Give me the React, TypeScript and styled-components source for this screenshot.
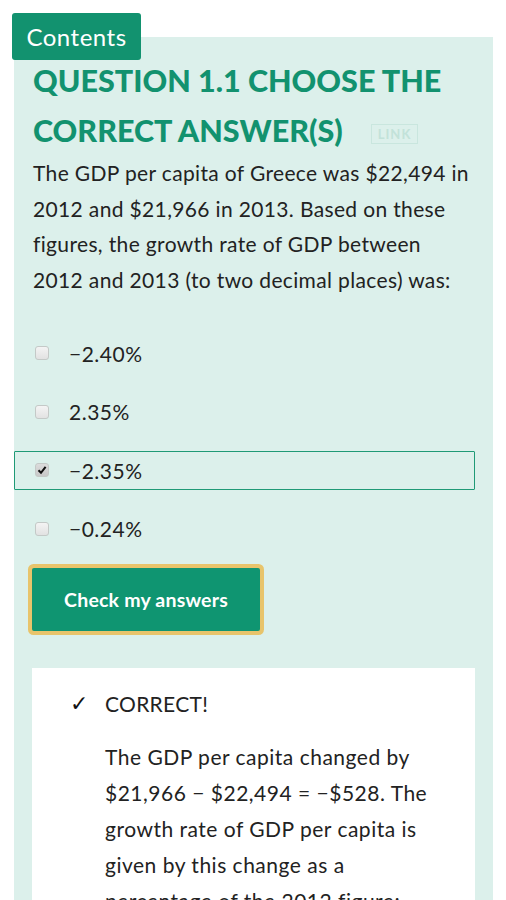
import React from "react";
import styled, { createGlobalStyle } from "styled-components";

const Global = createGlobalStyle`
  html, body { margin: 0; padding: 0; background: #ffffff; }
  body { font-family: Lato, "Open Sans", sans-serif; color: #222; }
`;

const Page = styled.div`
  position: relative;
  width: 506px;
  height: 900px;
  overflow: hidden;
  padding-top: 37px;
  box-sizing: border-box;
`;

const ContentsTab = styled.button`
  position: absolute;
  left: 12px;
  top: 13px;
  width: 129px;
  height: 47px;
  border: none;
  border-radius: 3px;
  background: #12926f;
  color: #fff;
  font-family: Lato, sans-serif;
  font-size: 24px;
  letter-spacing: 0.5px;
  padding: 0;
  z-index: 2;
`;

const Panel = styled.section`
  margin-left: 14px;
  width: 479px;
  box-sizing: border-box;
  background: #dcf0eb;
  padding: 18px 18px 40px 19px;
  min-height: 900px;
`;

const Heading = styled.h2`
  margin: 0;
  font-family: Lato, sans-serif;
  font-weight: 900;
  font-size: 30.5px;
  line-height: 50px;
  color: #12926f;
  text-transform: uppercase;
`;

const LinkTag = styled.span`
  display: inline-block;
  margin-left: 28px;
  vertical-align: 3px;
  border: 1.5px solid #c9e6de;
  color: #c2e2d9;
  font-size: 13px;
  font-weight: 700;
  line-height: 16px;
  padding: 1px 6px;
  letter-spacing: 1px;
`;

const Question = styled.p`
  margin: 0;
  font-size: 21px;
  letter-spacing: 0.35px;
  line-height: 35.5px;
  color: #222;
`;

const Options = styled.div`
  display: flex;
  flex-direction: column;
  gap: 19.5px;
  margin-top: 36.5px;
  margin-left: -19px;
`;

const OptionRow = styled.label<{ $selected?: boolean }>`
  display: flex;
  align-items: center;
  height: 39px;
  box-sizing: border-box;
  border: 1.5px solid ${(p) => (p.$selected ? "#1f9a76" : "transparent")};
  border-radius: 1px;
  padding-left: 20px;
  font-size: 21px;
  letter-spacing: 0.5px;
  color: #222;
`;

const Box = styled.span<{ $checked?: boolean }>`
  width: 14px;
  height: 14px;
  box-sizing: border-box;
  border: 1px solid #c4c9c7;
  border-radius: 3px;
  background: ${(p) =>
    p.$checked ? "linear-gradient(#dcdcdc, #c8c8c8)" : "linear-gradient(#f4f4f4, #e2e2e2)"};
  margin-right: 20px;
  display: inline-flex;
  align-items: center;
  justify-content: center;
`;

const CheckButton = styled.button`
  margin-top: 19.5px;
  width: 228px;
  height: 63px;
  margin-left: -1px;
  border: none;
  border-radius: 2px;
  background: #0f9571;
  box-shadow: 0 0 0 4px #e8c46b;
  color: #fff;
  font-family: Lato, sans-serif;
  font-weight: 700;
  font-size: 19.5px;
  letter-spacing: 0.2px;
`;

const Feedback = styled.div`
  margin-top: 37px;
  margin-left: -1px;
  background: #fff;
  padding: 18px 35px 20px 38px;
`;

const ResultLine = styled.div`
  display: flex;
  align-items: center;
  height: 36px;
  font-size: 21px;
  letter-spacing: 0.3px;
  color: #222;
`;

const Tick = styled.span`
  width: 35px;
  font-size: 22px;
  font-weight: 700;
  font-family: "DejaVu Sans", sans-serif;
  color: #111;
`;

const Explanation = styled.p`
  margin: 17px 0 0 35px;
  font-size: 21px;
  letter-spacing: 0.5px;
  line-height: 36px;
  color: #222;
`;

const options = [
  { text: "\u22122.40%" },
  { text: "2.35%" },
  { text: "\u22122.35%", checked: true },
  { text: "\u22120.24%" },
];

export default function App() {
  return (
    <>
      <Global />
      <Page>
        <ContentsTab>Contents</ContentsTab>
        <Panel>
          <Heading>
            Question 1.1 Choose the correct answer(s)
            <LinkTag>LINK</LinkTag>
          </Heading>
          <Question>
            The GDP per capita of Greece was $22,494 in 2012 and $21,966 in 2013. Based on these
            figures, the growth rate of GDP between 2012 and 2013 (to two decimal places) was:
          </Question>
          <Options>
            {options.map((o) => (
              <OptionRow key={o.text} $selected={o.checked}>
                <Box $checked={o.checked}>
                  {o.checked && (
                    <svg width="10" height="10" viewBox="0 0 10 10">
                      <path d="M1.5 5.2 L4 7.8 L8.6 1.8" fill="none" stroke="#111" strokeWidth="2" />
                    </svg>
                  )}
                </Box>
                {o.text}
              </OptionRow>
            ))}
          </Options>
          <CheckButton>Check my answers</CheckButton>
          <Feedback>
            <ResultLine>
              <Tick>✓</Tick>
              CORRECT!
            </ResultLine>
            <Explanation>
              The GDP per capita changed by $21,966 − $22,494 = −$528. The growth rate of GDP per
              capita is given by this change as a percentage of the 2012 figure: −$528 / $22,494 ×
              100 = −2.35%.
            </Explanation>
          </Feedback>
        </Panel>
      </Page>
    </>
  );
}
